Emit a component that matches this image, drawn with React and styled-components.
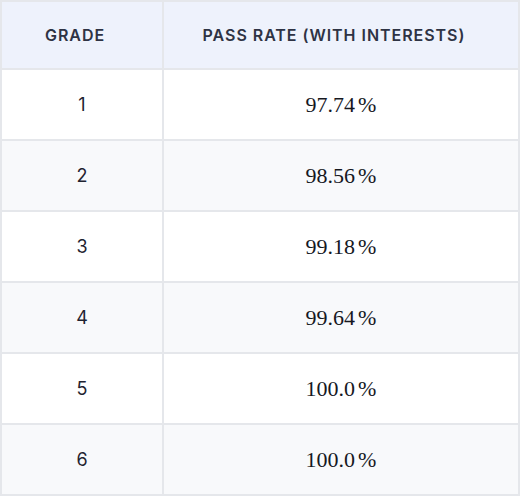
import React from 'react'
import styled, { createGlobalStyle } from "styled-components"

const GlobalStyle = createGlobalStyle`
  html, body {
    margin: 0;
    padding: 0;
    background: #ffffff;
  }
  body {
    font-family: "Inter", "Open Sans", sans-serif;
  }
`

const rows = [
  { grade: 1, rate: "97.74" },
  { grade: 2, rate: "98.56" },
  { grade: 3, rate: "99.18" },
  { grade: 4, rate: "99.64" },
  { grade: 5, rate: "100.0" },
  { grade: 6, rate: "100.0" },
]

function App() {
  return (
    <>
      <GlobalStyle />
      <Table>
        <colgroup>
          <col style={{ width: 162 }} />
          <col />
        </colgroup>
        <thead>
          <tr>
            <Th>Grade</Th>
            <Th>Pass rate (with interests)</Th>
          </tr>
        </thead>
        <tbody>
          {rows.map((r, i) => (
            <Row key={r.grade} $striped={i % 2 === 1}>
              <Td>{r.grade}</Td>
              <Td>
                <Math>{r.rate}<Pct>%</Pct></Math>
              </Td>
            </Row>
          ))}
        </tbody>
      </Table>
    </>
  )
}

export default App;

const Table = styled.table`
  width: 520px;
  border-collapse: collapse;
  table-layout: fixed;
  border: 2px solid #e5e7eb;
`

const Th = styled.th`
  height: 66px;
  padding: 0 18px 0 4px;
  background: #eef2fc;
  border: 2px solid #e5e7eb;
  color: #2e3344;
  font-family: "Inter", "Open Sans", sans-serif;
  font-size: 16px;
  font-weight: 600;
  letter-spacing: 0.06em;
  text-transform: uppercase;
  text-align: center;
  vertical-align: middle;
  white-space: nowrap;
`

const Row = styled.tr`
  background: ${p => (p.$striped ? "#f8f9fb" : "#ffffff")};
`

const Td = styled.td`
  height: 69px;
  padding: 0 12px;
  border: 2px solid #e5e7eb;
  color: #1f2330;
  font-family: "Inter", "Open Sans", sans-serif;
  font-size: 18px;
  text-align: center;
  vertical-align: middle;
`

const Math = styled.span`
  font-family: "Liberation Serif", "DejaVu Serif", serif;
  font-size: 22px;
  color: #16181f;
`

const Pct = styled.span`
  margin-left: 3px;
`
